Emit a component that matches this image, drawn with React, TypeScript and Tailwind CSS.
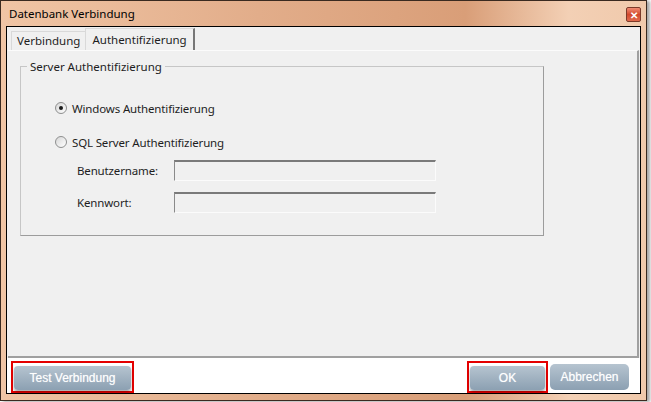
import React from "react";

const font = "font-['Segoe_UI','Noto_Sans','Open_Sans',sans-serif]";

const Radio: React.FC<{ checked?: boolean; label: string }> = ({ checked, label }) => (
  <label className="flex items-center gap-[5px] text-[11.5px] tracking-[-0.15px] text-[#1e1e1e] h-[14px]">
    <span className="w-[12px] h-[12px] rounded-full border border-[#8e8f8f] bg-gradient-to-br from-[#d7d7d7] to-[#ffffff] flex items-center justify-center">
      {checked && <span className="w-[4px] h-[4px] rounded-full bg-[#1b1b1b]" />}
    </span>
    {label}
  </label>
);

const Field: React.FC<{ label: string }> = ({ label }) => (
  <div className="flex items-center">
    <span className="w-[97px] text-[11.5px] tracking-[-0.15px] text-[#1e1e1e]">{label}</span>
    <div className="w-[262px] h-[21px] bg-[#f0f0f0] border border-[#fbfbfb] border-t-[2px] border-t-[#7a7a7a] border-l-[#8a8a8a]" />
  </div>
);

const ActionButton: React.FC<{ label: string; width: string; marked?: boolean }> = ({ label, width, marked }) => (
  <div className={`p-[1px] ${marked ? "border-2 border-[#e40000]" : "border-2 border-transparent"}`}>
    <button
      className={`${width} h-[24px] rounded-[4px] bg-gradient-to-b from-[#b6c4d0] to-[#8ca0b2] text-white text-[12px] font-['Liberation_Sans',Arial,sans-serif] [text-shadow:0_0_1px_rgba(255,255,255,0.6)] shadow-[0_2px_3px_rgba(0,0,0,0.35)]`}
    >
      {label}
    </button>
  </div>
);

export default function App() {
  return (
    <div className={`w-[651px] h-[402px] bg-white ${font}`}>
      <div className="w-[647px] h-[401px] border border-[#3a2a20] bg-[linear-gradient(90deg,#f0c5a5_0%,#e2ad8a_40%,#d99e78_72%,#f3d0b5_88%,#f0c9ab_100%)] shadow-[3px_1px_3px_rgba(0,0,0,0.35)] flex flex-col px-[5px] pb-[6px]">
        <div className="h-[25px] flex items-center justify-between pl-[3px]">
          <span className="text-[11.5px] text-black">Datenbank Verbindung</span>
          <span className="w-[15px] h-[15px] rounded-[2px] border border-[#7b3b2a] bg-gradient-to-b from-[#f08b72] via-[#d2482c] to-[#e06a4d] flex items-center justify-center text-white text-[10px] font-bold leading-none mt-[2px]">
            ✕
          </span>
        </div>
        <div className="flex-1 border border-black bg-white flex flex-col">
          <div className="flex-1 bg-[#f0f0f0] flex flex-col px-[1px] pt-[1px]">
            {/* tabs */}
            <div className="flex items-end h-[22px] pl-[3px]">
              <div className="h-[19px] px-[5px] border border-[#d9d9d9] border-b-0 bg-[#f0f0f0] text-[11.5px] text-[#1e1e1e] flex items-center">
                Verbindung
              </div>
              <div className="h-[22px] px-[6px] border border-[#d9d9d9] border-r-[#777777] border-r-2 border-b-0 bg-[#f0f0f0] text-[11.5px] text-[#1e1e1e] flex items-center -ml-[1px]">
                Authentifizierung
              </div>
            </div>
            <div className="flex-1 border-t border-t-[#fbfbfb] border-r-2 border-r-[#a0a0a0] border-b-2 border-b-[#a0a0a0] pl-[12px] pt-[7px]">
              <fieldset className="w-[524px] h-[178px] border border-[#c6c6c6] border-r-[#9c9c9c] border-b-[#9c9c9c] px-[34px] pt-[26px]">
                <legend className="text-[11.5px] text-[#1e1e1e] px-[3px] -ml-[28px]">Server Authentifizierung</legend>
                <div className="flex flex-col">
                  <Radio checked label="Windows Authentifizierung" />
                  <div className="h-[20px]" />
                  <Radio label="SQL Server Authentifizierung" />
                  <div className="flex flex-col gap-[11px] pl-[22px] mt-[11px]">
                    <Field label="Benutzername:" />
                    <Field label="Kennwort:" />
                  </div>
                </div>
              </fieldset>
            </div>
          </div>
          <div className="h-[35px] bg-white flex items-center justify-between pl-[4px] pr-[11px] pt-[2px]">
            <ActionButton label="Test Verbindung" width="w-[117px]" marked />
            <div className="flex items-center">
              <ActionButton label="OK" width="w-[75px]" marked />
              <button className="w-[79px] h-[26px] ml-[2px] rounded-[5px] bg-gradient-to-b from-[#b6c4d0] to-[#8ca0b2] text-white text-[12px] font-['Liberation_Sans',Arial,sans-serif] [text-shadow:0_0_1px_rgba(255,255,255,0.6)]">
                Abbrechen
              </button>
            </div>
          </div>
        </div>
      </div>
    </div>
  );
}
